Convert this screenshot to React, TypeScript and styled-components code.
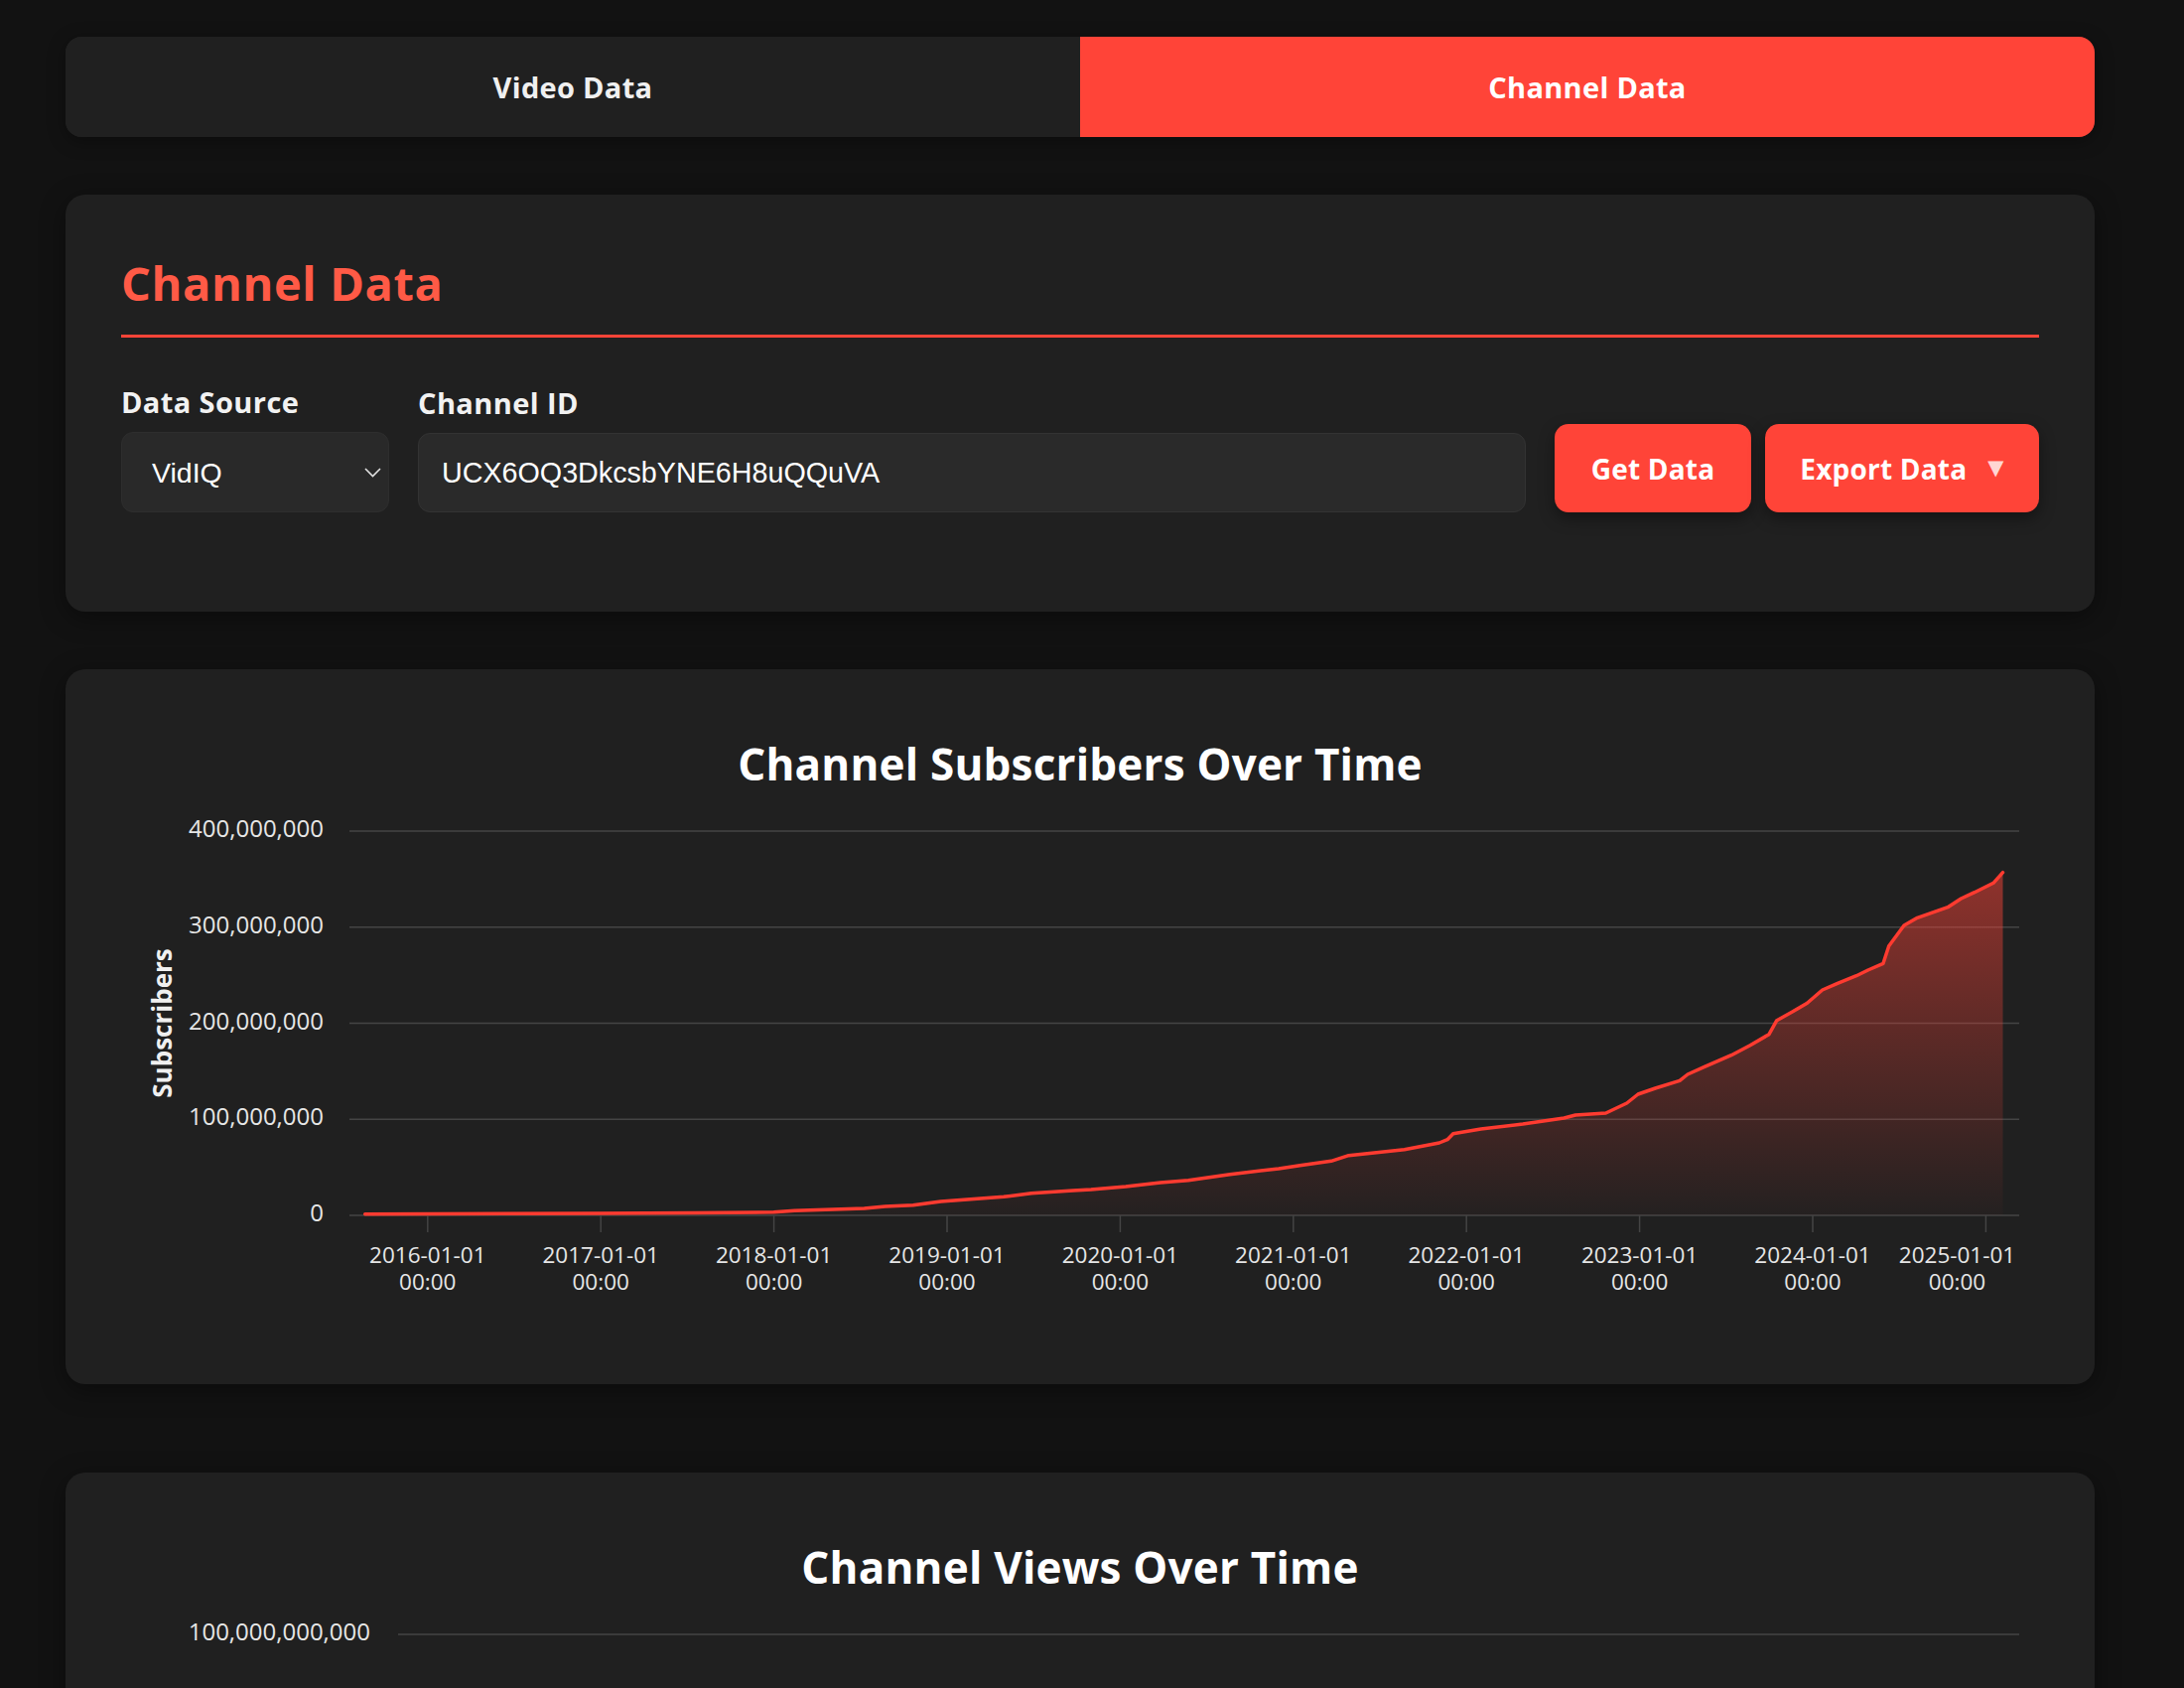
import React from "react";
import styled, { createGlobalStyle } from "styled-components";

const GlobalStyle = createGlobalStyle`
  html, body { margin: 0; padding: 0; background: #121212; }
  body { font-family: "Open Sans", "DejaVu Sans", sans-serif; color: #fff; }
  * { box-sizing: border-box; }
`;

const RED = "#ff4438";

const Page = styled.div`
  display: flex;
  flex-direction: column;
  padding: 37px 90px 80px 66px;
`;

const Tabs = styled.nav`
  display: flex;
  height: 101px;
  border-radius: 16px;
  overflow: hidden;
  background: #202020;
  box-shadow: 0 4px 18px rgba(0, 0, 0, 0.35);
`;

const Tab = styled.button<{ $active?: boolean }>`
  flex: 1;
  margin: 0;
  padding: 0;
  border: 0;
  cursor: pointer;
  background: ${(p) => (p.$active ? RED : "#202020")};
  color: ${(p) => (p.$active ? "#ffffff" : "#f0f0f0")};
  font: 700 29px/1 "Open Sans", sans-serif;
  letter-spacing: 0.3px;
`;

const Card = styled.section<{ $mt: number; $pt: number; $pb: number }>`
  margin-top: ${(p) => p.$mt}px;
  padding: ${(p) => p.$pt}px 56px ${(p) => p.$pb}px 56px;
  background: #202020;
  border-radius: 20px;
  box-shadow: 0 6px 26px rgba(0, 0, 0, 0.4);
`;

const Heading = styled.h2`
  margin: 0;
  padding-bottom: 24px;
  border-bottom: 3px solid ${RED};
  color: #ff5a46;
  font: 700 47px/56px "Open Sans", sans-serif;
  letter-spacing: 0.6px;
`;

const FormRow = styled.div`
  display: flex;
  align-items: flex-end;
  gap: 29px;
  margin-top: 48px;
`;

const Field = styled.div<{ $grow?: boolean; $width?: number }>`
  display: flex;
  flex-direction: column;
  gap: 13px;
  flex: ${(p) => (p.$grow ? "1 1 auto" : "0 0 auto")};
  width: ${(p) => (p.$width ? `${p.$width}px` : "auto")};
`;

const Label = styled.label`
  color: #f2f2f2;
  font: 700 29px/34px "Open Sans", sans-serif;
  letter-spacing: 0.4px;
`;

const SelectWrap = styled.div`
  position: relative;
  height: 81px;
`;

const Select = styled.select`
  appearance: none;
  -webkit-appearance: none;
  width: 100%;
  height: 100%;
  padding: 0 40px 0 30px;
  border: 1px solid #2e2e2e;
  border-radius: 12px;
  background: #292929;
  color: #ffffff;
  font: 400 28.5px "Liberation Sans", Arial, sans-serif;
  outline: none;
`;

const Chevron = styled.svg`
  position: absolute;
  right: 8px;
  top: 50%;
  transform: translateY(-50%);
  pointer-events: none;
`;

const Input = styled.input`
  width: 100%;
  height: 80px;
  padding: 0 23px;
  border: 1px solid #333333;
  border-radius: 12px;
  background: #2a2a2a;
  color: #ffffff;
  font: 400 28.7px "Liberation Sans", Arial, sans-serif;
  outline: none;
`;

const ButtonGroup = styled.div`
  display: flex;
  gap: 14px;
`;

const Button = styled.button<{ $width: number }>`
  display: flex;
  align-items: center;
  justify-content: center;
  gap: 21px;
  width: ${(p) => p.$width}px;
  height: 89px;
  padding: 0;
  border: 0;
  border-radius: 14px;
  background: ${RED};
  color: #ffffff;
  font: 700 28px/1 "Open Sans", sans-serif;
  letter-spacing: 0.2px;
  box-shadow: 0 6px 16px rgba(0, 0, 0, 0.4);
  cursor: pointer;
`;

const Caret = styled.span`
  color: rgba(255, 255, 255, 0.8);
  font: 400 21px/1 "DejaVu Sans", sans-serif;
`;

const ChartTitle = styled.h3`
  margin: 0;
  text-align: center;
  color: #ffffff;
  font: 700 44px/52px "Open Sans", sans-serif;
  letter-spacing: 0.2px;
`;

const ChartSvg = styled.svg`
  display: block;
  margin-top: 16px;
  width: 100%;
  height: 527px;
  overflow: visible;
`;

const YLabel = styled.text`
  fill: #e6e6e6;
  font: 400 24px "Open Sans", sans-serif;
`;

const XLabel = styled.text`
  fill: #e6e6e6;
  font: 400 22.5px "Open Sans", sans-serif;
`;

const AxisTitle = styled.text`
  fill: #f0f0f0;
  font: 700 26px "Open Sans", sans-serif;
`;

// Subscriber curve, traced from the reference (page coordinates)
const SUB_POINTS: [number, number][] = [
  [368.7, 1221.7], [605, 1221], [700, 1220.6], [780.5, 1219.8], [801.5, 1218.3], [871.6, 1216],
  [892.7, 1214], [920.8, 1212.7], [948.8, 1209], [1012, 1204.3], [1040, 1200.7],
  [1082, 1198], [1100, 1197], [1135, 1194], [1170, 1190], [1198, 1187.7],
  [1240, 1181.7], [1289, 1176], [1310.5, 1172.7], [1342, 1168.3], [1359.6, 1162.7],
  [1415.7, 1156.7], [1450.8, 1150], [1459, 1146.7], [1464.8, 1140.7], [1492.8, 1136],
  [1535, 1131], [1576.5, 1125], [1588, 1122], [1618.6, 1120], [1639.7, 1110],
  [1651, 1101], [1668.4, 1095], [1693, 1087.3], [1701, 1081], [1718, 1073.3],
  [1745, 1061.7], [1764, 1051.7], [1783, 1040.7], [1790.8, 1026.7], [1806, 1018.3],
  [1821.4, 1009.3], [1836.7, 996], [1852, 989.3], [1871, 981.7], [1882.7, 976],
  [1898, 969.3], [1903.7, 951.7], [1919, 931], [1932.4, 923.3], [1963, 912.7],
  [1976.4, 904], [1990, 897.7], [2009, 888.3], [2018.5, 877.7],
];

const BASE_Y = 413;
const SUB_SVG: [number, number][] = SUB_POINTS.map(([x, y]) => [x - 123, y - 810]);
const VIEW_SVG: [number, number][] = SUB_SVG.map(([x, y]) => [x, BASE_Y - (BASE_Y - y) * 0.85]);

const YEARS = ["2016", "2017", "2018", "2019", "2020", "2021", "2022", "2023", "2024", "2025"];

type ChartProps = {
  id: string;
  yLabels: string[];
  gridLeft: number;
  labelRight: number;
  axisTitle: string;
  points: [number, number][];
};

const LineChart: React.FC<ChartProps> = ({ id, yLabels, gridLeft, labelRight, axisTitle, points }) => {
  const top = 26;
  const step = (BASE_Y - top) / (yLabels.length - 1);
  const gridRight = 1912;
  const line = points.map(([x, y], i) => `${i ? "L" : "M"}${x.toFixed(1)} ${y.toFixed(1)}`).join(" ");
  const first = points[0];
  const last = points[points.length - 1];
  const area = `${line} L${last[0]} ${BASE_Y} L${first[0]} ${BASE_Y} Z`;
  const minY = Math.min(...points.map((p) => p[1]));
  return (
    <ChartSvg viewBox="0 0 1932 527" preserveAspectRatio="none">
      <defs>
        <linearGradient id={id} gradientUnits="userSpaceOnUse" x1="0" y1={minY} x2="0" y2={BASE_Y}>
          <stop offset="0" stopColor="#ff4438" stopOpacity="0.5" />
          <stop offset="1" stopColor="#ff4438" stopOpacity="0.02" />
        </linearGradient>
      </defs>
      <AxisTitle x={51} y={219.5} textAnchor="middle" transform="rotate(-90 51 219.5)">
        {axisTitle}
      </AxisTitle>
      {yLabels.map((l, i) => {
        const y = top + i * step;
        return (
          <g key={l}>
            <line x1={gridLeft} x2={gridRight} y1={y} y2={y} stroke="#444" strokeWidth={1.5} />
            <YLabel x={labelRight} y={y + 6} textAnchor="end">
              {l}
            </YLabel>
          </g>
        );
      })}
      {YEARS.map((yr, k) => {
        const x = 308.8 + k * 174.4;
        const cx = k === YEARS.length - 1 ? 1849.5 : x;
        return (
          <g key={yr}>
            <line x1={x} x2={x} y1={BASE_Y} y2={BASE_Y + 17} stroke="#444" strokeWidth={1.5} />
            <XLabel x={cx} y={461} textAnchor="middle">{`${yr}-01-01`}</XLabel>
            <XLabel x={cx} y={488} textAnchor="middle">00:00</XLabel>
          </g>
        );
      })}
      <path d={area} fill={`url(#${id})`} />
      <path d={line} fill="none" stroke="#ff3b30" strokeWidth={3.5} strokeLinejoin="round" strokeLinecap="round" />
    </ChartSvg>
  );
};

export default function App() {
  return (
    <>
      <GlobalStyle />
      <Page>
        <Tabs>
          <Tab>Video Data</Tab>
          <Tab $active>Channel Data</Tab>
        </Tabs>

        <Card $mt={58} $pt={61} $pb={100}>
          <Heading>Channel Data</Heading>
          <FormRow>
            <Field $width={270}>
              <Label>Data Source</Label>
              <SelectWrap>
                <Select defaultValue="vidiq">
                  <option value="vidiq">VidIQ</option>
                  <option value="socialblade">SocialBlade</option>
                </Select>
                <Chevron width="17" height="10" viewBox="0 0 17 10">
                  <polyline points="1,1 8.5,8.5 16,1" fill="none" stroke="#e0e0e0" strokeWidth="1.6" />
                </Chevron>
              </SelectWrap>
            </Field>
            <Field $grow>
              <Label>Channel ID</Label>
              <Input defaultValue="UCX6OQ3DkcsbYNE6H8uQQuVA" />
            </Field>
            <ButtonGroup>
              <Button $width={198}>Get Data</Button>
              <Button $width={276}>
                Export Data <Caret>▼</Caret>
              </Button>
            </ButtonGroup>
          </FormRow>
        </Card>

        <Card $mt={58} $pt={69} $pb={56}>
          <ChartTitle>Channel Subscribers Over Time</ChartTitle>
          <LineChart
            id="subsFill"
            yLabels={["400,000,000", "300,000,000", "200,000,000", "100,000,000", "0"]}
            gridLeft={230}
            labelRight={204}
            axisTitle="Subscribers"
            points={SUB_SVG}
          />
        </Card>

        <Card $mt={89} $pt={69} $pb={56}>
          <ChartTitle>Channel Views Over Time</ChartTitle>
          <LineChart
            id="viewsFill"
            yLabels={["100,000,000,000", "80,000,000,000", "60,000,000,000", "40,000,000,000", "20,000,000,000", "0"]}
            gridLeft={279}
            labelRight={251}
            axisTitle="Views"
            points={VIEW_SVG}
          />
        </Card>
      </Page>
    </>
  );
}
